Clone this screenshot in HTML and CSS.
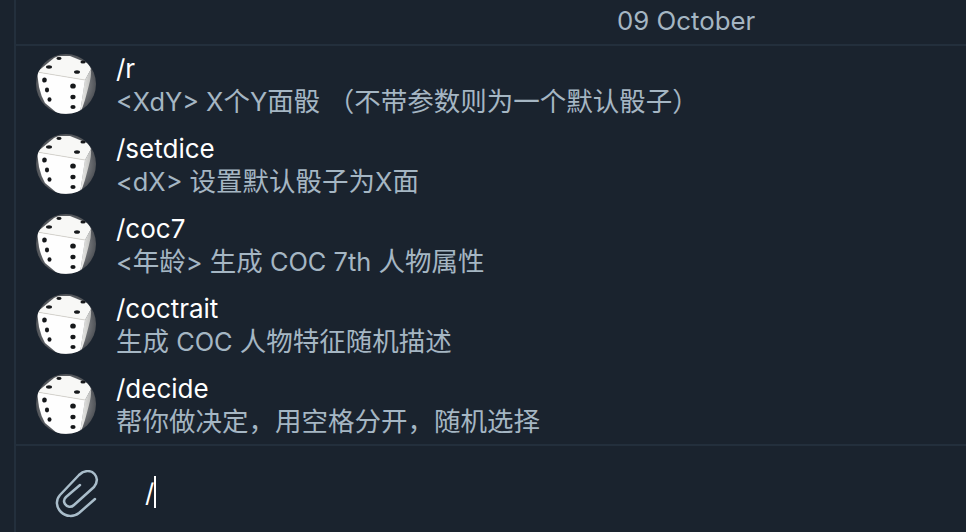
FILE: index.html
```html
<!DOCTYPE html>
<html lang="zh">
<head>
<meta charset="utf-8">
<title>Chat commands</title>
<link rel="stylesheet" href="styles.css">
</head>
<body>
<svg class="defs" width="0" height="0" aria-hidden="true">
  <defs>
    <radialGradient id="bg" cx="50%" cy="50%" r="52%">
      <stop offset="0.6" stop-color="#85878a"/>
      <stop offset="1" stop-color="#4a4d52"/>
    </radialGradient>
    <linearGradient id="side" x1="0" y1="0" x2="1" y2="0">
      <stop offset="0" stop-color="#f2f2f0"/>
      <stop offset="1" stop-color="#bdbdbb"/>
    </linearGradient>
    <clipPath id="disc"><circle cx="30" cy="30" r="30"/></clipPath>
    <g id="dice">
      <g clip-path="url(#disc)">
        <rect width="60" height="60" fill="url(#bg)"/>
        <path d="M1 18 L18 4 Q21 2 25 2 L34 2 L50 8.500 Q53 10 55 15 L49 26 Z" fill="#f8f8f6"/>
        <path d="M49 26 L55 15 Q55.500 22 53 31 L49 46 Q47 53 44 59 Z" fill="url(#side)"/>
        <path d="M1 18 L49 26 L44 59 Q36 60 25 60 L21 59 L9 49 Q5 42 3 33 Z" fill="#fefefe"/>
        <path d="M1 18 L49 26" stroke="#cfccc4" stroke-width="0.7" fill="none"/>
        <g fill="#16181b">
          <ellipse cx="23" cy="4.500" rx="2.600" ry="1.400"/>
          <ellipse cx="47" cy="8" rx="2.600" ry="1.500"/>
          <ellipse cx="13" cy="13" rx="3" ry="1.700"/>
          <ellipse cx="41" cy="18" rx="3" ry="1.800"/>
          <ellipse cx="8.500" cy="26" rx="2.300" ry="2.600"/>
          <ellipse cx="11" cy="36" rx="2.100" ry="2.400"/>
          <ellipse cx="13.500" cy="45.500" rx="2" ry="2.200"/>
          <ellipse cx="37" cy="32" rx="2.800" ry="2.600"/>
          <ellipse cx="37" cy="43" rx="2.600" ry="2.300"/>
          <ellipse cx="37" cy="53" rx="2.600" ry="2.100"/>
        </g>
      </g>
    </g>
  </defs>
</svg>
<div class="app">
  <aside class="rail"></aside>
  <main class="chat">
    <header class="date-bar"><span class="date">09 October</span></header>
    <ul class="commands">
      <li class="command">
        <svg class="avatar" viewBox="0 0 60 60"><use href="#dice"/></svg>
        <div class="info"><div class="name">/r</div><div class="desc"><span class="lat">&lt;XdY&gt; X</span>个<span class="lat">Y</span>面骰 （不带参数则为一个默认骰子）</div></div>
      </li>
      <li class="command">
        <svg class="avatar" viewBox="0 0 60 60"><use href="#dice"/></svg>
        <div class="info"><div class="name">/setdice</div><div class="desc"><span class="lat">&lt;dX&gt; </span>设置默认骰子为<span class="lat">X</span>面</div></div>
      </li>
      <li class="command">
        <svg class="avatar" viewBox="0 0 60 60"><use href="#dice"/></svg>
        <div class="info"><div class="name">/coc7</div><div class="desc"><span class="lat">&lt;</span>年龄<span class="lat">&gt; </span>生成<span class="lat"> COC 7th </span>人物属性</div></div>
      </li>
      <li class="command">
        <svg class="avatar" viewBox="0 0 60 60"><use href="#dice"/></svg>
        <div class="info"><div class="name">/coctrait</div><div class="desc">生成<span class="lat"> COC </span>人物特征随机描述</div></div>
      </li>
      <li class="command">
        <svg class="avatar" viewBox="0 0 60 60"><use href="#dice"/></svg>
        <div class="info"><div class="name">/decide</div><div class="desc">帮你做决定，用空格分开，随机选择</div></div>
      </li>
    </ul>
    <footer class="composer">
      <svg class="clip" viewBox="0 0 48 50" fill="none"><path d="M40 29 L24 43 C19 47 11 47 6 42 C1 37 0.500 30 5 25 L24 5 C29 0 36 0 39.500 4 C43 8 42 13 39 17 L19 35 C16 38 12 37 10 34 C8 31 9 29 11 27 L25 15" stroke="#a9bdca" stroke-width="2.500" stroke-linecap="round" stroke-linejoin="round"/></svg>
      <div class="input"><span class="typed">/</span><span class="caret"></span></div>
    </footer>
  </main>
</div>
</body>
</html>
```
FILE: styles.css
```css
* { box-sizing: border-box; }
html, body { margin: 0; padding: 0; height: 100%; overflow: hidden; background: #1a232e; }
.defs { position: absolute; }
.app { display: flex; width: 966px; height: 532px; font-family: Inter, "Noto Sans CJK SC", sans-serif; }
.rail { width: 16px; flex: none; background: #1a232e; border-right: 2px solid #232f3c; }
.chat { flex: 1; display: flex; flex-direction: column; min-width: 0; }
.date-bar { height: 46px; flex: none; border-bottom: 2px solid #232f3c; padding-left: 601px; display: flex; align-items: center; }
.date { color: #a5b6c3; font-size: 25.8px; line-height: 42px; margin-bottom: 2px; }
.commands { list-style: none; margin: 0; padding: 0; flex: none; height: 398px; overflow: hidden; }
.command { height: 80px; display: flex; align-items: flex-start; padding: 8px 0 0 20px; }
.avatar { width: 60px; height: 60px; flex: none; display: block; }
.info { margin-left: 20px; margin-top: -2px; }
.name { color: #fff; font-size: 26px; line-height: 34px; height: 32px; }
.desc { color: #a5b6c3; font-size: 26.500px; line-height: 34px; white-space: nowrap; }
.lat { font-size: 25.400px; }
.composer { flex: 1; border-top: 2px solid #232f3c; display: flex; align-items: flex-start; padding: 24px 0 0 39px; }
.clip { width: 48px; height: 50px; flex: none; }
.input { display: flex; align-items: flex-start; margin-left: 42px; margin-top: 6px; height: 34px; }
.typed { color: #fff; font-size: 25.800px; line-height: 34px; }
.caret { width: 2px; height: 32px; background: #fff; }
```
